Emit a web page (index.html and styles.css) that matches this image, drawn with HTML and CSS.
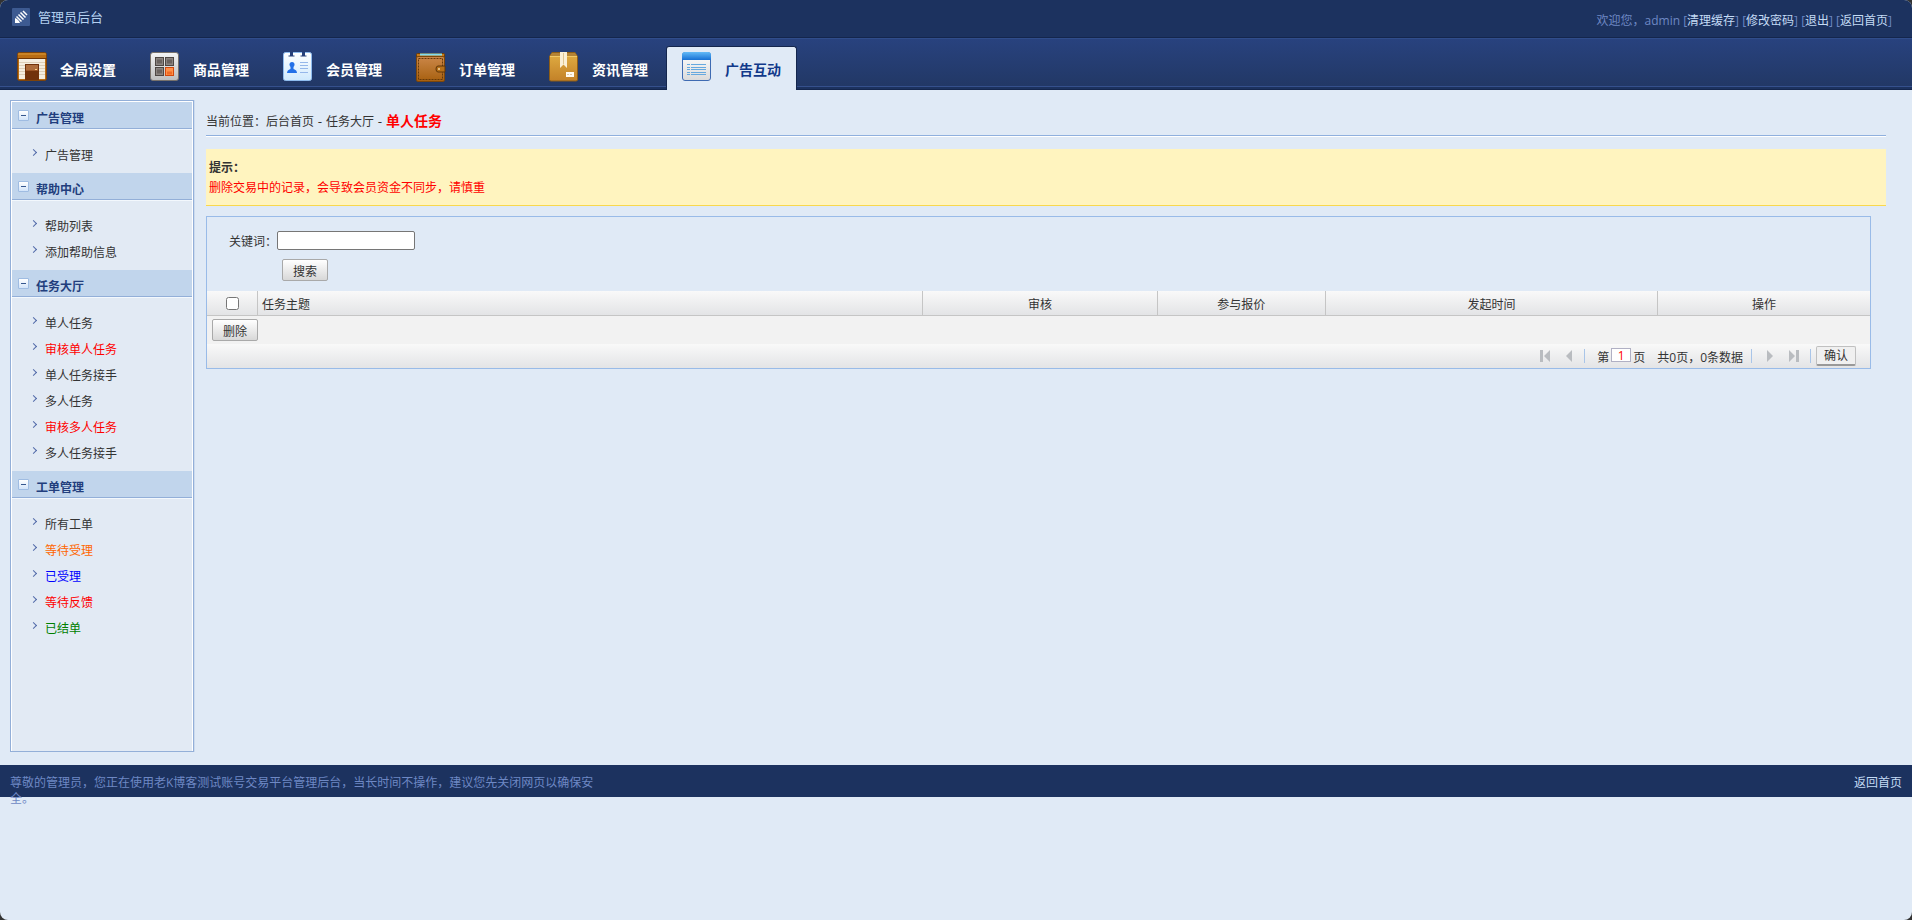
FILE: index.html
```html
<!DOCTYPE html>
<html lang="zh-CN">
<head>
<meta charset="utf-8">
<title>管理员后台</title>
<link rel="stylesheet" href="styles.css">
</head>
<body>
<div class="page">
  <header class="topbar">
    <div class="brand">
      <svg class="brand-logo" viewBox="0 0 18 18" aria-hidden="true">
        <rect width="18" height="18" rx="1" fill="#3d5a91"/>
        <path d="M3 10v5h5l-1-2-2-2z" fill="#fff"/>
        <path d="M4.500 8.500l5 5M6.500 6.500l5 5M8.500 4.500l5 5M11 3l4 4" stroke="#fff" stroke-width="1.500"/>
      </svg>
      <h1 class="brand-name">管理员后台</h1>
    </div>
    <div class="account">欢迎您，admin [<a href="#">清理缓存</a>] [<a href="#">修改密码</a>] [<a href="#">退出</a>] [<a href="#">返回首页</a>]</div>
  </header>

  <nav class="nav">
    <a class="tab" href="#">
      <svg class="tab-icon" viewBox="0 0 30 30" aria-hidden="true">
        <rect x=".5" y=".5" width="29" height="28" rx="2" fill="#b96c12" stroke="#7c430b"/>
        <path d="M1 2h28" stroke="#dc9a38"/><path d="M0 6.500h30" stroke="#713606"/>
        <rect x="2" y="7" width="26" height="20" fill="#f5eee0"/>
        <path d="M2 10.500h26M2 13.500h26M2 16.500h26M2 19.500h26M2 22.500h26" stroke="#ddcfb8"/>
        <rect x="8" y="12" width="14" height="16" fill="#71320b"/>
        <rect x="9" y="13" width="12" height="5" fill="#ad6c3b"/>
        <path d="M9 18.500h12" stroke="#9a5426"/><path d="M18 17.500h2" stroke="#ffcf80"/>
      </svg>
      <span>全局设置</span>
    </a>
    <a class="tab" href="#">
      <svg class="tab-icon" viewBox="0 0 30 30" aria-hidden="true">
        <defs><linearGradient id="g-metal" x2="0" y2="1"><stop stop-color="#f5f5f5"/><stop offset="1" stop-color="#bdbdbd"/></linearGradient></defs>
        <rect x=".5" y=".5" width="28" height="28" rx="2.500" fill="url(#g-metal)" stroke="#77716b"/>
        <g fill="#8b8480" stroke="#4e4743"><rect x="5.500" y="5.500" width="8" height="8"/><rect x="15.500" y="5.500" width="8" height="8"/><rect x="5.500" y="15.500" width="8" height="8"/></g>
        <path d="M7 9.500h5M17 9.500h5M7 19.500h5" stroke="#6a625e" stroke-width="4"/>
        <rect x="15.500" y="15.500" width="8" height="8" fill="#ff9149" stroke="#d2480c"/>
        <path d="M17 21h5" stroke="#f06a24" stroke-width="3"/>
      </svg>
      <span>商品管理</span>
    </a>
    <a class="tab" href="#">
      <svg class="tab-icon" viewBox="0 0 30 30" aria-hidden="true">
        <defs><linearGradient id="g-card" x2="0" y2="1"><stop stop-color="#fff"/><stop offset="1" stop-color="#cfe9fd"/></linearGradient></defs>
        <rect x=".5" y=".5" width="28" height="28" rx="2" fill="url(#g-card)" stroke="#8fbcee"/>
        <path d="M7 0h3v4H7zM19 0h3v4h-3z" fill="#26407a"/>
        <path d="M5.500 4h6M17.500 4h6" stroke="#26407a"/>
        <circle cx="9" cy="12.500" r="2.500" fill="#2270e8"/>
        <path d="M7.500 14h3v3q3.500 1 3.500 4H4q0-3 3.500-4z" fill="#2270e8"/>
        <path d="M17 10.500h8M17 13.500h8M17 16.500h8M17 20.500h8" stroke="#95b7ea"/>
      </svg>
      <span>会员管理</span>
    </a>
    <a class="tab" href="#">
      <svg class="tab-icon" viewBox="0 0 30 30" aria-hidden="true">
        <defs><linearGradient id="g-leather" x2="0" y2="1"><stop stop-color="#cb8749"/><stop offset="1" stop-color="#a7600f"/></linearGradient></defs>
        <rect x=".5" y="1.500" width="28" height="5" rx="1" fill="#c67a1a" stroke="#6f3c06"/>
        <path d="M4 2.500h22" stroke="#7fdcf0" stroke-width="2"/>
        <rect x=".5" y="4.500" width="28" height="25" rx="1.500" fill="url(#g-leather)" stroke="#7b460b"/>
        <rect x="2.500" y="6.500" width="24" height="21" fill="none" stroke="#643909" stroke-dasharray="2 1"/>
        <path d="M29 14h-7q-2 0-2 3t2 3h7z" fill="#b77018" stroke="#5f3508"/>
        <circle cx="23" cy="17" r="1" fill="#f6d59c"/>
      </svg>
      <span>订单管理</span>
    </a>
    <a class="tab" href="#">
      <svg class="tab-icon" viewBox="0 0 30 30" aria-hidden="true">
        <defs><linearGradient id="g-box" x2="0" y2="1"><stop stop-color="#e1ae43"/><stop offset="1" stop-color="#c38128"/></linearGradient></defs>
        <path d="M3 .5h23l2.500 4v23q0 1.500-1.500 1.500H2Q.5 29 .5 27.500v-23z" fill="url(#g-box)" stroke="#8d5d16"/>
        <path d="M3 1h23l2 3H1z" fill="#b48335"/><path d="M1 4.500h27" stroke="#f1c966"/>
        <path d="M11 0h7v16l-3.500-3.500L11 16z" fill="#fbf0d6"/><path d="M14.500 1v11" stroke="#e0c590"/>
        <rect x="17" y="20" width="8" height="5" fill="#fffaf0"/><path d="M18 22.500h6" stroke="#dec9a5" stroke-dasharray="2 1"/>
      </svg>
      <span>资讯管理</span>
    </a>
    <a class="tab tab-active" href="#" aria-current="page">
      <svg class="tab-icon" viewBox="0 0 30 30" aria-hidden="true">
        <defs>
          <linearGradient id="g-title" x2="0" y2="1"><stop stop-color="#62baf7"/><stop offset="1" stop-color="#1670d4"/></linearGradient>
          <linearGradient id="g-sheet" x2="0" y2="1"><stop stop-color="#fff"/><stop offset="1" stop-color="#dadada"/></linearGradient>
        </defs>
        <rect x=".5" y=".5" width="28" height="28" rx="2.500" fill="url(#g-sheet)" stroke="#3f6bb2"/>
        <path d="M0 8V3q0-3 3-3h23q3 0 3 3v5z" fill="url(#g-title)"/>
        <path d="M5 12.500h3M9 12.500h15M5 15.500h3M9 15.500h15M5 17.500h3M9 17.500h15M5 20.500h3M9 20.500h15M5 22.500h3M9 22.500h15" stroke="#66a9df"/>
      </svg>
      <span>广告互动</span>
    </a>
  </nav>

  <div class="body">
    <aside class="sidebar">
      <section>
        <h2 class="group-title"><span class="toggle"></span>广告管理</h2>
        <ul class="menu"><li><a href="#">广告管理</a></li></ul>
      </section>
      <section>
        <h2 class="group-title"><span class="toggle"></span>帮助中心</h2>
        <ul class="menu"><li><a href="#">帮助列表</a></li><li><a href="#">添加帮助信息</a></li></ul>
      </section>
      <section>
        <h2 class="group-title"><span class="toggle"></span>任务大厅</h2>
        <ul class="menu">
          <li><a href="#">单人任务</a></li>
          <li><a class="red" href="#">审核单人任务</a></li>
          <li><a href="#">单人任务接手</a></li>
          <li><a href="#">多人任务</a></li>
          <li><a class="red" href="#">审核多人任务</a></li>
          <li><a href="#">多人任务接手</a></li>
        </ul>
      </section>
      <section>
        <h2 class="group-title"><span class="toggle"></span>工单管理</h2>
        <ul class="menu">
          <li><a href="#">所有工单</a></li>
          <li><a class="orange" href="#">等待受理</a></li>
          <li><a class="blue" href="#">已受理</a></li>
          <li><a class="red" href="#">等待反馈</a></li>
          <li><a class="green" href="#">已结单</a></li>
        </ul>
      </section>
    </aside>

    <main class="main">
      <div class="crumbs">当前位置：后台首页 - 任务大厅 - <strong>单人任务</strong></div>
      <div class="tip"><strong>提示：</strong><p>删除交易中的记录，会导致会员资金不同步，请慎重</p></div>

      <div class="panel">
        <form class="search">
          <div class="search-row"><label for="keyword">关键词：</label><input class="keyword" id="keyword" type="text"></div>
          <button class="btn search-btn" type="button">搜索</button>
        </form>
        <table class="grid">
          <colgroup><col class="col-check"><col class="col-subject"><col class="col-audit"><col class="col-bid"><col class="col-time"><col class="col-action"></colgroup>
          <thead>
            <tr>
              <th><input class="check" type="checkbox" aria-label="全选"></th>
              <th class="left">任务主题</th><th>审核</th><th>参与报价</th><th>发起时间</th><th>操作</th>
            </tr>
          </thead>
        </table>
        <div class="actions"><button class="btn" type="button">删除</button></div>
        <div class="pager">
          <button class="arrow" type="button" aria-label="首页"><svg viewBox="0 0 10 12"><path d="M0 0h3v12H0zM10 0v12L4 6z"/></svg></button>
          <button class="arrow" type="button" aria-label="上一页"><svg viewBox="0 0 10 12"><path d="M8 0v12L2 6z"/></svg></button>
          <span class="sep sep-first"></span>
          <div class="page-info"><label for="pageno">第</label><input class="pageno" id="pageno" type="text" value="1"><span>页</span><span class="total">共0页，0条数据</span></div>
          <span class="sep"></span>
          <button class="arrow" type="button" aria-label="下一页"><svg viewBox="0 0 10 12"><path d="M2 0v12l6-6z"/></svg></button>
          <button class="arrow" type="button" aria-label="末页"><svg viewBox="0 0 10 12"><path d="M7 0h3v12H7zM0 0v12l6-6z"/></svg></button>
          <span class="sep sep-last"></span>
          <button class="confirm" type="button">确认</button>
        </div>
      </div>
    </main>
  </div>

  <footer class="footer">
    <p class="notice">尊敬的管理员，您正在使用老K博客测试账号交易平台管理后台，当长时间不操作，建议您先关闭网页以确保安全。</p>
    <a href="#">返回首页</a>
  </footer>
</div>
</body>
</html>
```
FILE: styles.css
```css
*, *::before { box-sizing: border-box; }
html { background: #333; }
body, h1, h2, p, ul { margin: 0; padding: 0; }
body, button, input {
  font-family: "Open Sans", "Noto Sans CJK SC", sans-serif;
  font-size: 12px;
  color: #333;
}
body { line-height: 20px; }
a { color: inherit; text-decoration: none; }
ul { list-style: none; }

.page {
  min-height: 100vh;
  background: #e0eaf6;
  border-radius: 8px;
  overflow: hidden;
}

.topbar {
  display: flex;
  justify-content: space-between;
  height: 38px;
  padding: 8px 20px 0 12px;
  background: #1c325f;
  border-bottom: 1px solid #14264d;
}
.brand { display: flex; gap: 8px; }
.brand-logo { width: 18px; height: 18px; }
.brand-name { font-size: 13px; font-weight: 400; line-height: 18px; color: #b4d0f0; }
.account { padding-top: 3px; color: #6e88c4; }
.account a { color: #c4dbf5; }

.nav {
  display: flex;
  gap: 2px;
  height: 52px;
  padding: 7px 0 0 1px;
  background: linear-gradient(#28427e, #223866 47px, #35508c 47px, #35508c 48px, #1c325f 48px, #1c325f 50px, #14264d 50px);
  border-top: 1px solid #304d8b;
}
.tab {
  display: flex;
  gap: 13px;
  width: 131px;
  height: 44px;
  padding: 6px 0 0 16px;
  font-size: 14px;
  font-weight: 700;
  line-height: 36px;
  color: #fff;
}
.tab-icon { width: 30px; height: 30px; }
.tab-active {
  padding: 5px 0 0 15px;
  background: #e0eaf6;
  border: 1px solid #14264d;
  border-width: 1px 1px 0;
  border-radius: 3px 3px 0 0;
  color: #11398a;
}

.body { display: flex; gap: 12px; padding: 10px 26px 13px 10px; }

.sidebar {
  flex: none;
  width: 184px;
  min-height: 652px;
  border: 1px solid #93afd8;
  box-shadow: inset 1px 1px #fff, inset -1px 0 #fff, 1px 0 #ccdbee;
  background: #e2eaf4;
  padding-top: 1px;
}
.group-title {
  display: flex;
  gap: 7px;
  height: 27px;
  padding: 0 0 0 6px;
  margin: 0 1px;
  background: #c1d5ec;
  border-bottom: 1px solid #93afd8;
  box-shadow: 0 1px #f3f8fd;
  font-size: 12px;
  line-height: 34px;
  color: #223e7d;
}
.toggle {
  width: 11px;
  height: 11px;
  margin-top: 8px;
  border: 1px solid #9fbce2;
  border-radius: 1px;
  background: linear-gradient(#35578f, #35578f) center / 5px 1px no-repeat, linear-gradient(#fff, #d2e4fa);
}
.menu { padding: 13px 0 5px 22px; }
.menu li { display: flex; align-items: center; gap: 11px; height: 26px; }
.menu li::before {
  content: "";
  width: 5px;
  height: 5px;
  margin: 0 -2px 6px -2px;
  border: solid #5069a8;
  border-width: 1px 1px 0 0;
  transform: rotate(45deg);
}
.menu a { padding-top: 2px; }
.red { color: #f00; }
.orange { color: #f60; }
.blue { color: #00f; }
.green { color: #008000; }

.main { flex: 1; min-width: 0; }
.crumbs {
  height: 36px;
  padding-top: 10px;
  border-bottom: 1px solid #8fb0de;
  box-shadow: 0 1px #fff;
  font-family: "DejaVu Sans", "Noto Sans CJK SC", sans-serif;
}
.crumbs strong {
  font-family: "Noto Sans CJK SC", sans-serif;
  font-size: 14px;
  color: #f00;
}
.tip {
  margin-top: 13px;
  padding: 9px 3px 7px;
  background: #fff4bf;
  border-bottom: 1px solid #f9d84c;
}
.tip strong { display: block; }
.tip p { color: #f00; }

.panel { margin: 10px 15px 0 0; border: 1px solid #99bbe8; }
.search { height: 74px; padding: 14px 0 0 22px; }
.search-row { display: flex; height: 20px; line-height: 22px; }
.keyword {
  width: 138px;
  height: 19px;
  padding: 1px 2px;
  background: #fff;
  border: 1px solid #767676;
  border-radius: 2px;
}
.btn {
  display: block;
  width: 46px;
  height: 22px;
  padding: 4px 0 0;
  border: 1px solid #a9a9a9;
  border-radius: 2px;
  background: linear-gradient(#fff, #d8d8d8);
  line-height: 16px;
}
.search-btn { margin: 8px 0 0 53px; }

.grid { width: 100%; table-layout: fixed; border-collapse: separate; border-spacing: 0; }
.grid th {
  height: 25px;
  padding: 4px 0 0;
  font-weight: 400;
  background: linear-gradient(#f9f9f9, #e3e4e6);
  border: solid #c5c5c5;
  border-width: 0 1px 1px 0;
}
.grid th:last-child { border-right: 0; }
.grid .left { text-align: left; padding-left: 4px; }
.check { display: block; width: 13px; height: 13px; margin: 0 auto 4px; }
.col-check { width: 51px; }
.col-subject { width: 40%; }
.col-audit { width: 14.1%; }
.col-bid { width: 10.1%; }
.col-time { width: 20%; }

.actions { padding: 3px 5px; background: #f2f2f2; }
.pager {
  display: flex;
  justify-content: flex-end;
  align-items: center;
  height: 24px;
  padding-right: 14px;
  background: linear-gradient(#f9f9f9, #e3e4e6);
}
.arrow { width: 24px; height: 20px; padding: 0; border: 0; background: none; }
.arrow svg { display: block; width: 10px; height: 12px; margin: 0 auto; fill: #b9bcc0; }
.sep { width: 1px; height: 14px; margin: 0 6px 0 8px; background: #a9c5e8; }
.sep-first { margin: 0 8px 0 3px; }
.sep-last { margin: 0 5px 0 4px; }
.page-info { display: flex; padding: 4px 0 0 4px; }
.pageno {
  width: 20px;
  height: 14px;
  margin: 0 2px;
  padding: 0;
  border: 1px solid #b0b0c4;
  background: #fff;
  text-align: center;
  color: #f00;
}
.total { margin-left: 12px; }
.confirm {
  width: 40px;
  height: 20px;
  padding: 0;
  border: 1px solid #c0c0c0;
  border-bottom: 2px solid #999;
  border-radius: 2px;
  background: #f0f0f0;
  line-height: 16px;
}

.footer {
  display: flex;
  justify-content: space-between;
  height: 32px;
  padding: 10px 10px 0;
  background: #1c325f;
  line-height: 16px;
  color: #6e88c4;
}
.notice { max-width: 592px; }
.footer a { color: #c4dbf5; }
```
